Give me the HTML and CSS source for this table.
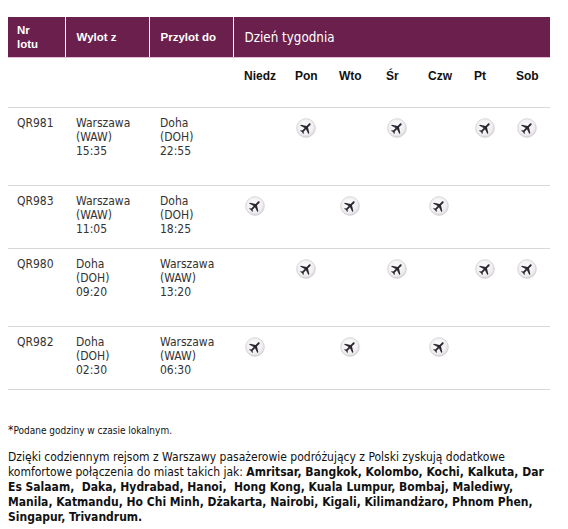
FILE: index.html
```html
<!DOCTYPE html>
<html lang="pl">
<head>
<meta charset="utf-8">
<title>Rozkład lotów</title>
<link rel="stylesheet" href="styles.css">
</head>
<body>
<svg width="0" height="0" class="defs">
  <defs>
    <radialGradient id="g" cx="45%" cy="40%" r="65%">
      <stop offset="0" stop-color="#ffffff"/>
      <stop offset="0.7" stop-color="#efedef"/>
      <stop offset="1" stop-color="#d3d0d3"/>
    </radialGradient>
    <symbol id="plane" viewBox="0 0 20 20">
      <circle cx="10" cy="10" r="9.3" fill="url(#g)" stroke="#cfcbcf" stroke-width="0.8"/>
      <g transform="translate(10 10) rotate(45) scale(0.62) translate(-11.5 -12)">
        <path fill="#2b2630" d="M21 16v-2l-8-5V3.5c0-.83-.67-1.5-1.5-1.5S10 2.670 10 3.5V9l-8 5v2l8-2.5V19l-2 1.5V22l3.5-1 3.5 1v-1.5L13 19v-5.5l8 2.5z"/>
      </g>
    </symbol>
  </defs>
</svg>
<table class="flights">
  <colgroup>
    <col class="c-nr"><col class="c-od"><col class="c-do">
    <col class="d1"><col class="d2"><col class="d3"><col class="d4"><col class="d5"><col class="d6"><col class="d7">
  </colgroup>
  <thead>
    <tr class="head">
      <th class="h-nr">Nr<br>lotu</th>
      <th>Wylot z</th>
      <th>Przylot do</th>
      <th colspan="7" class="h-days">Dzień tygodnia</th>
    </tr>
    <tr class="days">
      <td></td><td></td><td></td>
      <td>Niedz</td><td>Pon</td><td>Wto</td><td>Śr</td><td>Czw</td><td>Pt</td><td>Sob</td>
    </tr>
  </thead>
  <tbody>
    <tr class="tall">
      <td>QR981</td><td>Warszawa<br>(WAW)<br>15:35</td><td>Doha<br>(DOH)<br>22:55</td>
      <td></td>
      <td><svg class="ic"><use href="#plane"/></svg></td>
      <td></td>
      <td><svg class="ic"><use href="#plane"/></svg></td>
      <td></td>
      <td><svg class="ic"><use href="#plane"/></svg></td>
      <td><svg class="ic"><use href="#plane"/></svg></td>
    </tr>
    <tr>
      <td>QR983</td><td>Warszawa<br>(WAW)<br>11:05</td><td>Doha<br>(DOH)<br>18:25</td>
      <td><svg class="ic"><use href="#plane"/></svg></td>
      <td></td>
      <td><svg class="ic"><use href="#plane"/></svg></td>
      <td></td>
      <td><svg class="ic"><use href="#plane"/></svg></td>
      <td></td>
      <td></td>
    </tr>
    <tr class="tall">
      <td>QR980</td><td>Doha<br>(DOH)<br>09:20</td><td>Warszawa<br>(WAW)<br>13:20</td>
      <td></td>
      <td><svg class="ic"><use href="#plane"/></svg></td>
      <td></td>
      <td><svg class="ic"><use href="#plane"/></svg></td>
      <td></td>
      <td><svg class="ic"><use href="#plane"/></svg></td>
      <td><svg class="ic"><use href="#plane"/></svg></td>
    </tr>
    <tr>
      <td>QR982</td><td>Doha<br>(DOH)<br>02:30</td><td>Warszawa<br>(WAW)<br>06:30</td>
      <td><svg class="ic"><use href="#plane"/></svg></td>
      <td></td>
      <td><svg class="ic"><use href="#plane"/></svg></td>
      <td></td>
      <td><svg class="ic"><use href="#plane"/></svg></td>
      <td></td>
      <td></td>
    </tr>
  </tbody>
</table>
<p class="note"><span class="star">*</span>Podane godziny w czasie lokalnym.</p>
<p class="text">Dzięki codziennym rejsom z Warszawy pasażerowie podróżujący z Polski zyskują dodatkowe komfortowe połączenia do miast takich jak: <b>Amritsar, Bangkok, Kolombo, Kochi, Kalkuta, Dar Es Salaam,&nbsp; Daka, Hydrabad, Hanoi,&nbsp; Hong Kong, Kuala Lumpur, Bombaj, Malediwy, Manila, Katmandu, Ho Chi Minh, Dżakarta, Nairobi, Kigali, Kilimandżaro, Phnom Phen, Singapur, Trivandrum.</b></p>
</body>
</html>
```
FILE: styles.css
```css
body {
  margin: 8px;
  background: #fff;
  color: #222;
  font-family: "DejaVu Sans Condensed", "DejaVu Sans", Verdana, sans-serif;
  font-size: 12px;
}
.defs { position: absolute; width: 0; height: 0; }
.flights {
  margin-top: 9px;
  width: 542px;
  border-collapse: collapse;
  table-layout: fixed;
}
.c-nr { width: 57px; }
.c-od { width: 84px; }
.c-do { width: 84px; }
.d1 { width: 51px; }
.d2 { width: 44px; }
.d3 { width: 47px; }
.d4 { width: 42px; }
.d5 { width: 46px; }
.d6 { width: 42px; }
.d7 { width: 45px; }
.flights th {
  background: #6a1f4d;
  color: #fff;
  font-family: "Liberation Sans", Arial, sans-serif;
  font-weight: bold;
  font-size: 11.5px;
  text-align: left;
  white-space: nowrap;
  padding: 0 11px;
  height: 40px;
  border-left: 1px solid #fff;
  border-bottom: 1px solid #e7bdd6;
  line-height: 15px;
}
.flights th.h-nr { border-left: none; padding-left: 9px; line-height: 14px; }
.flights .h-days {
  font-family: "DejaVu Sans Condensed", "DejaVu Sans", sans-serif;
  font-weight: normal;
  font-size: 13.3px;
}
.flights td {
  vertical-align: top;
  text-align: left;
  padding: 8px 0 0 11px;
  line-height: 14px;
  border-bottom: 1px solid #d8d8d8;
  color: #333;
}
.flights td:first-child { padding-left: 9px; }
.flights .days td {
  height: 38px;
  padding-top: 11px;
  font-family: "Liberation Sans", Arial, sans-serif;
  font-weight: bold;
  color: #111;
  font-size: 12px;
}
tbody tr td { height: 54px; }
tbody tr.tall td { height: 69px; }
.ic {
  display: block;
  width: 20px;
  height: 20px;
  margin: 2px 0 0 1px;
}
.note {
  margin: 33px 0 0;
  font-size: 10px;
  color: #111;
}
.star { font-size: 12px; }
.text {
  margin: 13px 0 0;
  font-size: 12px;
  line-height: 15px;
  color: #111;
}
.text b { font-weight: bold; }
```
